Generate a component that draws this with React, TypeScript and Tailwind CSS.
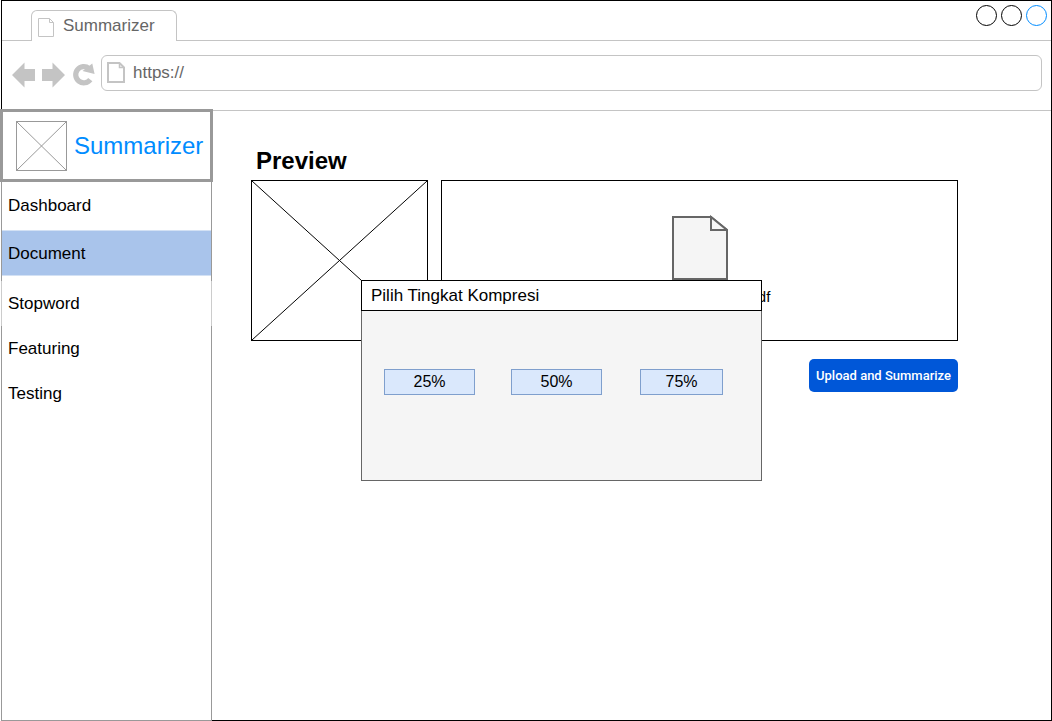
import type { ReactNode } from "react";

const navItems = [
  { label: "Dashboard", className: "h-[49px]" },
  { label: "Document", className: "h-[46px] border-y border-[#d3e1f4] bg-[#a9c4eb] pt-0.5", active: true },
  { label: "Stopword", className: "-mx-px mt-[5px] h-[45px] border-x border-[#cccccc]" },
  { label: "Featuring", className: "h-[45px]" },
  { label: "Testing", className: "h-[45px]" },
];

const levels = [
  { value: "25%", className: "w-[91px]" },
  { value: "50%", className: "ml-[36px] w-[91px]" },
  { value: "75%", className: "ml-[38px] w-[83px]" },
];

function CrossBox({ className, color, label }: { className: string; color: string; label: string }) {
  return (
    <div className={className} role="img" aria-label={label}>
      <svg className="block size-full" viewBox="0 0 100 100" preserveAspectRatio="none" stroke={color} aria-hidden="true">
        <path d="M0 0L100 100M0 100L100 0" fill="none" vectorEffect="non-scaling-stroke" />
      </svg>
    </div>
  );
}

function ToolButton({ label, children }: { label: string; children: ReactNode }) {
  return (
    <button type="button" aria-label={label} className="shrink-0">
      {children}
    </button>
  );
}

function BrowserHeader() {
  return (
    <header className="border-l border-black">
      <div className="flex h-10">
        <div className="w-[29px] shrink-0 border-b border-[#c4c4c4]" />
        <div className="mt-[9px] flex w-[146px] shrink-0 items-center gap-[9px] rounded-t-md border-x border-t border-[#c4c4c4] pl-[6px] text-[#666666]">
          <svg className="mt-0.5 h-[19px] w-4" viewBox="0 0 16 19" fill="none" stroke="#c4c4c4" aria-hidden="true">
            <path d="M0.5 0.5H11.5L15.5 4.5V18.5H0.5Z" />
            <path d="M11.5 0.5V4.5H15.5" />
          </svg>
          <span>Summarizer</span>
        </div>
        <div className="flex flex-1 justify-end gap-1 border-b border-[#c4c4c4] pt-1 pr-1">
          <button type="button" aria-label="Minimize" className="size-[21px] rounded-full border border-black" />
          <button type="button" aria-label="Maximize" className="size-[21px] rounded-full border border-black" />
          <button type="button" aria-label="Close" className="size-[21px] rounded-full border border-[#008cff]" />
        </div>
      </div>
      <div className="flex h-[70px] items-center border-b border-[#c4c4c4] pr-[9px] pb-[6px] pl-[10px]">
        <ToolButton label="Back">
          <svg className="mt-1 h-[26px] w-[23px]" viewBox="0 0 23 26" fill="#c4c4c4">
            <path d="M0 13L12.5 0.5V7H23V19H12.5V25.5Z" />
          </svg>
        </ToolButton>
        <ToolButton label="Forward">
          <svg className="mt-1 ml-[7px] h-[26px] w-[23px]" viewBox="0 0 23 26" fill="#c4c4c4">
            <path d="M23 13L10.5 0.5V7H0V19H10.5V25.5Z" />
          </svg>
        </ToolButton>
        <ToolButton label="Reload">
          <svg className="mt-1 ml-[7px] h-[26px] w-[23px]" viewBox="0 0 23 26" fill="none">
            <path d="M18.3 17.6A8.1 8.1 0 1 1 17 6.5" stroke="#c4c4c4" strokeWidth="5.2" />
            <path d="M20.3 1.5L22.6 12L10.5 9Z" fill="#c4c4c4" />
          </svg>
        </ToolButton>
        <div className="ml-[6px] flex h-9 flex-1 items-center gap-2 rounded-md border border-[#c4c4c4] pl-[5px]">
          <svg className="h-[21px] w-[18px]" viewBox="0 0 18 21" fill="none" stroke="#c4c4c4" strokeWidth="2" aria-hidden="true">
            <path d="M1 1H12.5L17 5.5V20H1Z" />
            <path d="M12.5 1V5.5H17" strokeWidth="1.5" />
          </svg>
          <input
            type="text"
            aria-label="Address"
            defaultValue="https://"
            className="h-7 min-w-0 flex-1 bg-transparent text-[#666666] outline-none"
          />
        </div>
      </div>
    </header>
  );
}

function Sidebar() {
  return (
    <aside className="-mt-0.5 flex w-[211px] shrink-0 flex-col border-x border-b border-[#999999]">
      <div className="-mr-[2px] -ml-[2px] flex h-[73px] items-center gap-[7px] border-[3px] border-[#999999] bg-white pl-[13px]">
        <CrossBox className="h-[50px] w-[51px] border border-[#999999]" color="#999999" label="Logo" />
        <span className="text-2xl text-[#008cff]">Summarizer</span>
      </div>
      <nav className="-mt-px flex flex-col">
        {navItems.map((item) => (
          <a
            key={item.label}
            href={`#${item.label.toLowerCase()}`}
            aria-current={item.active ? "page" : undefined}
            className={`flex items-center pl-[6px] ${item.className}`}
          >
            {item.label}
          </a>
        ))}
      </nav>
    </aside>
  );
}

function CompressionDialog() {
  return (
    <section
      role="dialog"
      aria-labelledby="compression-title"
      className="absolute top-[100px] left-[110px] w-[401px] border border-[#666666] bg-[#f5f5f5]"
    >
      <h2 id="compression-title" className="-mx-px -mt-px flex h-[31px] items-center border border-black bg-white pl-[9px]">
        Pilih Tingkat Kompresi
      </h2>
      <div className="flex px-[22px] pt-[58px] pb-[85px]">
        {levels.map((level) => (
          <button
            key={level.value}
            type="button"
            className={`h-[26px] border border-[#7f9fcd] bg-[#dae8fc] text-base leading-6 ${level.className}`}
          >
            {level.value}
          </button>
        ))}
      </div>
    </section>
  );
}

function Workspace() {
  return (
    <main className="flex-1 border-b border-black pt-[35px] pr-[93px] pl-[39px]">
      <h1 className="pl-[5px] text-2xl leading-[30px] font-bold">Preview</h1>
      <div className="relative mt-1">
        <div className="flex gap-[13px]">
          <CrossBox className="h-[161px] w-[177px] shrink-0 border border-black" color="#000000" label="Thumbnail" />
          <div className="flex h-[161px] flex-1 flex-col items-center border border-black pt-[34px]">
            <svg className="h-[66px] w-14" viewBox="0 0 56 66" fill="#f5f5f5" stroke="#666666" strokeWidth="2" aria-hidden="true">
              <path d="M1 2H39L55 15V64H1Z" />
              <path d="M39 2V15H55Z" />
            </svg>
            <span className="mt-1 text-[15px]">Nama Dokumen1.pdf</span>
          </div>
        </div>
        <CompressionDialog />
      </div>
      <div className="mt-[18px] flex justify-end">
        <button
          type="button"
          className="h-[33px] rounded-[5px] bg-[#0057d8] px-[7px] font-['Roboto',sans-serif] text-[13px] font-medium text-white"
        >
          Upload and Summarize
        </button>
      </div>
    </main>
  );
}

export default function App() {
  return (
    <div className="flex min-h-screen flex-col bg-white pl-px font-['Liberation_Sans',Arial,sans-serif] text-[17px] leading-6 text-black">
      <div className="flex flex-1 flex-col border-t border-r border-black">
        <BrowserHeader />
        <div className="flex flex-1">
          <Sidebar />
          <Workspace />
        </div>
      </div>
    </div>
  );
}
